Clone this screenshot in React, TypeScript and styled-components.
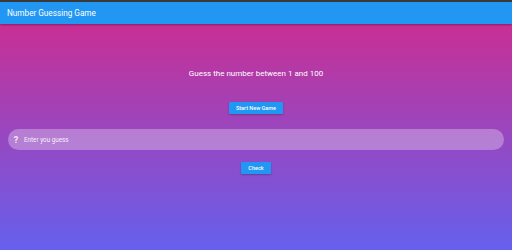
import React from "react";
import styled, { createGlobalStyle } from "styled-components";

const Global = createGlobalStyle`
  html, body { margin: 0; padding: 0; }
  body { font-family: Roboto, "Liberation Sans", sans-serif; }
`;

const Page = styled.div`
  width: 512px;
  height: 250px;
  display: flex;
  flex-direction: column;
  overflow: hidden;
`;

const StatusStrip = styled.div`
  height: 2px;
  background: #3a3a3a;
`;

const AppBar = styled.header`
  height: 22px;
  background: #2196f3;
  display: flex;
  align-items: center;
  padding-left: 7px;
  color: #fff;
  font-size: 8.2px;
  box-shadow: 0 1px 2px rgba(0, 0, 0, 0.35);
  position: relative;
  z-index: 1;
`;

const Body = styled.main`
  flex: 1;
  background: linear-gradient(180deg, #c82f94 0%, #6560ee 100%);
  display: flex;
  flex-direction: column;
  align-items: center;
  padding: 44px 8px 0;
`;

const Prompt = styled.div`
  color: #fff;
  font-size: 8px;
  line-height: 11px;
`;

const Button = styled.button<{ $mt: number }>`
  margin-top: ${(p) => p.$mt}px;
  height: 12px;
  padding: 0 7px;
  border: none;
  border-radius: 1px;
  background: #2196f3;
  color: #fff;
  font-family: Roboto, "Liberation Sans", sans-serif;
  font-size: 5.5px;
  font-weight: 500;
  box-shadow: 0 1px 2px rgba(0, 0, 0, 0.25);
`;

const Field = styled.div`
  margin-top: 15px;
  align-self: stretch;
  height: 21px;
  border-radius: 11px;
  background: rgba(255, 255, 255, 0.3);
  display: flex;
  align-items: center;
  padding-left: 5px;
  gap: 5px;
  color: #fff;
`;

const Icon = styled.span`
  width: 6px;
  text-align: center;
  font-size: 9px;
  font-weight: 700;
  color: rgba(255, 255, 255, 0.85);
`;

const Placeholder = styled.span`
  font-size: 6.3px;
  color: rgba(255, 255, 255, 0.9);
`;

export default function App() {
  return (
    <Page>
      <Global />
      <StatusStrip />
      <AppBar>Number Guessing Game</AppBar>
      <Body>
        <Prompt>Guess the number between 1 and 100</Prompt>
        <Button $mt={23}>Start New Game</Button>
        <Field>
          <Icon>?</Icon>
          <Placeholder>Enter you guess</Placeholder>
        </Field>
        <Button $mt={12}>Check</Button>
      </Body>
    </Page>
  );
}
